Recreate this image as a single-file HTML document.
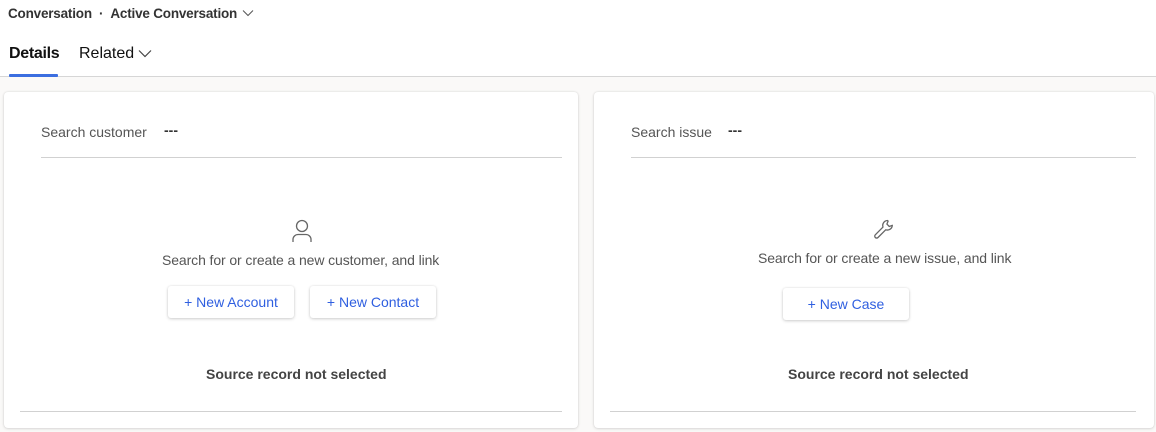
<!DOCTYPE html>
<html><head><style>
*{margin:0;padding:0;box-sizing:border-box}
body{width:1156px;height:432px;background:#faf9f8;font-family:"Liberation Sans",sans-serif;position:relative;overflow:hidden;color:#242424}
.top{position:absolute;left:0;top:0;width:1156px;height:77px;background:#fff;border-bottom:1px solid #d6d6d6}
.a{position:absolute;white-space:nowrap}
.card{position:absolute;background:#fff;border-radius:4px;box-shadow:0 0 2px rgba(0,0,0,.12),0 1px 3px rgba(0,0,0,.1)}
.line{position:absolute;height:1px;background:#d1d1d1}
.btn{position:absolute;height:32px;background:#fff;border-radius:3px;box-shadow:0 1px 3px rgba(0,0,0,.18),0 0 2px rgba(0,0,0,.08);color:#2f5fe0;font-size:14px;line-height:32px;text-align:center}
.gray{color:#555;font-size:14px}
</style></head><body>
<div class="top">
<div class="a" style="left:8px;top:6px;font-size:13.5px;font-weight:bold;color:#333;letter-spacing:-0.2px">Conversation&nbsp; · &nbsp;Active Conversation</div>
<svg class="a" style="left:242px;top:9px" width="12" height="8" viewBox="0 0 12 8"><path d="M1 1.5 6 6.5 11 1.5" fill="none" stroke="#555" stroke-width="1"/></svg>
<div class="a" style="left:9px;top:45px;font-size:16px;font-weight:bold;color:#111;letter-spacing:-0.3px">Details</div>
<div class="a" style="left:9px;top:74px;width:49px;height:3px;background:#3b6ee0;border-radius:1px"></div>
<div class="a" style="left:79px;top:45px;font-size:16px;color:#111">Related</div>
<svg class="a" style="left:138px;top:49px" width="14" height="9" viewBox="0 0 14 9"><path d="M1 1.5 7 7.5 13 1.5" fill="none" stroke="#444" stroke-width="1.2"/></svg>
</div>
<div class="card" style="left:4px;top:92px;width:574px;height:336px"></div>
<div class="card" style="left:594px;top:92px;width:560px;height:336px"></div>

<div class="a gray" style="left:41px;top:124px">Search customer</div>
<div class="a" style="left:164px;top:122px;font-size:14px;font-weight:bold;color:#333">---</div>
<div class="line" style="left:41px;top:157px;width:521px"></div>
<svg class="a" style="left:291px;top:219px" width="22" height="24" viewBox="0 0 22 24"><circle cx="11" cy="7" r="5.5" fill="none" stroke="#666" stroke-width="1.3"/><path d="M2 23v-2.5c0-3 2.5-5 5-5h8c2.5 0 5 2 5 5V23" fill="none" stroke="#666" stroke-width="1.3"/></svg>
<div class="a gray" style="left:162px;top:252px;letter-spacing:-0.1px">Search for or create a new customer, and link</div>
<div class="btn" style="left:168px;top:286px;width:126px">+ New Account</div>
<div class="btn" style="left:310px;top:286px;width:126px">+ New Contact</div>
<div class="a" style="left:206px;top:366px;font-size:14px;font-weight:bold;color:#444">Source record not selected</div>
<div class="line" style="left:20px;top:411px;width:542px"></div>

<div class="a gray" style="left:631px;top:124px">Search issue</div>
<div class="a" style="left:728px;top:122px;font-size:14px;font-weight:bold;color:#333">---</div>
<div class="line" style="left:631px;top:157px;width:505px"></div>
<svg class="a" style="left:872px;top:217px" width="24" height="24" viewBox="0 0 24 24"><path d="M15.5 3.5a5 5 0 0 0-4.5 6.6L3.3 17.8a1.9 1.9 0 0 0 2.7 2.7l7.7-7.7a5 5 0 0 0 6.6-4.5l-3 1.2-2.4-2.4 1.2-3a5 5 0 0 0-0.6-.6z" fill="none" stroke="#666" stroke-width="1.3" stroke-linejoin="round"/></svg>
<div class="a gray" style="left:758px;top:250px;letter-spacing:-0.1px">Search for or create a new issue, and link</div>
<div class="btn" style="left:783px;top:288px;width:126px">+ New Case</div>
<div class="a" style="left:788px;top:366px;font-size:14px;font-weight:bold;color:#444">Source record not selected</div>
<div class="line" style="left:610px;top:411px;width:526px"></div>
</body></html>
